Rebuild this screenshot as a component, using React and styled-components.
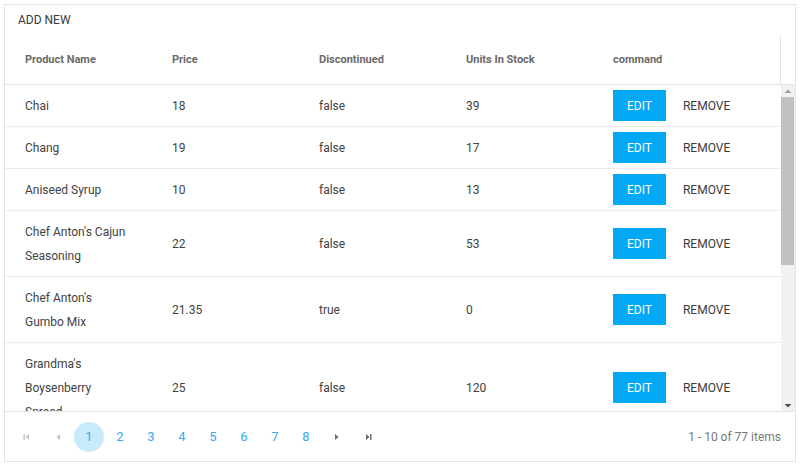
import React from "react";
import styled, { createGlobalStyle } from "styled-components";

const GlobalStyle = createGlobalStyle`
  html, body {
    margin: 0;
    padding: 0;
    background: #ffffff;
  }
  body {
    font-family: Roboto, "Liberation Sans", Arial, sans-serif;
    color: #424242;
  }
`;

const products = [
  { name: "Chai", price: 18, discontinued: false, stock: 39 },
  { name: "Chang", price: 19, discontinued: false, stock: 17 },
  { name: "Aniseed Syrup", price: 10, discontinued: false, stock: 13 },
  { name: "Chef Anton's Cajun Seasoning", price: 22, discontinued: false, stock: 53 },
  { name: "Chef Anton's Gumbo Mix", price: 21.35, discontinued: true, stock: 0 },
  { name: "Grandma's Boysenberry Spread", price: 25, discontinued: false, stock: 120 },
  { name: "Uncle Bob's Organic Dried Pears", price: 30, discontinued: false, stock: 15 },
  { name: "Northwoods Cranberry Sauce", price: 40, discontinued: false, stock: 6 },
  { name: "Mishi Kobe Niku", price: 97, discontinued: true, stock: 29 },
  { name: "Ikura", price: 31, discontinued: false, stock: 31 },
];

const columns = ["Product Name", "Price", "Discontinued", "Units In Stock", "command"];

const Page = styled.div`
  padding: 4px;
`;

const Grid = styled.div`
  height: 458px;
  border: 1px solid #e4e4e4;
  box-sizing: border-box;
  display: flex;
  flex-direction: column;
  background: #fff;
`;

const Toolbar = styled.div`
  height: 30px;
  display: flex;
  align-items: center;
`;

const FlatButton = styled.button`
  font-family: inherit;
  font-size: 12px;
  text-transform: uppercase;
  color: ${(p) => (p.$primary ? "#ffffff" : "#3a3a3a")};
  background: ${(p) => (p.$primary ? "#03a9f4" : "transparent")};
  border: none;
  height: 31px;
  padding: 0 ${(p) => (p.$primary ? "14px" : "13px")};
  margin: 0 ${(p) => (p.$primary ? "4px" : "0")} 0 0;
  cursor: pointer;
`;

const HeaderWrap = styled.div`
  padding-right: 14px;
  border-bottom: 1px solid #e4e4e4;
`;

const Table = styled.table`
  width: 100%;
  table-layout: fixed;
  border-collapse: collapse;
  border-spacing: 0;
`;

const HeaderTable = styled(Table)`
  border-right: 1px solid #e4e4e4;
`;

const Th = styled.th`
  text-align: left;
  font-size: 11px;
  font-weight: bold;
  color: #6a6a6a;
  height: 49px;
  padding: 0 20px;
  vertical-align: middle;
`;

const BodyArea = styled.div`
  flex: 1;
  min-height: 0;
  display: flex;
`;

const Content = styled.div`
  flex: 1;
  min-width: 0;
  overflow: hidden;
`;

const ScrollBar = styled.div`
  width: 14px;
  background: #f1f1f1;
  display: flex;
  flex-direction: column;
`;

const ScrollButton = styled.div`
  height: 12px;
  display: flex;
  align-items: center;
  justify-content: center;
`;

const ScrollThumb = styled.div`
  background: #c1c1c1;
  margin-right: 1px;
`;

const ScrollSpacer = styled.div`
  flex: 1;
`;

const Td = styled.td`
  font-size: 12px;
  line-height: 24px;
  padding: ${(p) => (p.$command ? "5px 20px" : "8.5px 24px 8.5px 20px")};
  border-bottom: 1px solid #ececec;
  vertical-align: middle;
  white-space: ${(p) => (p.$command ? "nowrap" : "normal")};
`;

const Pager = styled.div`
  height: 49px;
  border-top: 1px solid #e4e4e4;
  display: flex;
  align-items: center;
  padding: 0 14px 0 7px;
`;

const PagerNav = styled.div`
  display: flex;
  align-items: center;
  gap: 1px;
`;

const PagerItem = styled.span`
  width: 30px;
  height: 30px;
  border-radius: 50%;
  display: flex;
  align-items: center;
  justify-content: center;
  font-size: 13px;
  color: #3ba9f3;
  background: ${(p) => (p.$selected ? "#c9eafc" : "transparent")};
`;

const PagerInfo = styled.span`
  margin-left: auto;
  font-size: 12px;
  color: #787878;
`;

const Arrow = ({ dir = "left", bar = false, color }) => (
  <svg width="10" height="10" viewBox="0 0 10 10">
    {dir === "left" ? (
      <>
        {bar && <rect x="1.5" y="2" width="1.4" height="6" fill={color} />}
        <polygon points="7,2 3.5,5 7,8" fill={color} />
      </>
    ) : (
      <>
        <polygon points="3,2 6.5,5 3,8" fill={color} />
        {bar && <rect x="7.1" y="2" width="1.4" height="6" fill={color} />}
      </>
    )}
  </svg>
);

const Caret = ({ up, color }) => (
  <svg width="8" height="5" viewBox="0 0 8 5">
    <polygon points={up ? "0.5,4 7.5,4 4,0.5" : "0.5,1 7.5,1 4,4.5"} fill={color} />
  </svg>
);

const colWidths = [147, 147, 147, 147, null];

const Cols = () => (
  <colgroup>
    {colWidths.map((w, i) => (
      <col key={i} style={w ? { width: w } : undefined} />
    ))}
  </colgroup>
);

export default function App() {
  return (
    <Page>
      <GlobalStyle />
      <Grid>
        <Toolbar>
          <FlatButton>Add new</FlatButton>
        </Toolbar>
        <HeaderWrap>
          <HeaderTable>
            <Cols />
            <thead>
              <tr>
                {columns.map((c) => (
                  <Th key={c}>{c}</Th>
                ))}
              </tr>
            </thead>
          </HeaderTable>
        </HeaderWrap>
        <BodyArea>
          <Content>
            <Table>
              <Cols />
              <tbody>
                {products.map((p) => (
                  <tr key={p.name}>
                    <Td>{p.name}</Td>
                    <Td>{p.price}</Td>
                    <Td>{String(p.discontinued)}</Td>
                    <Td>{p.stock}</Td>
                    <Td $command>
                      <FlatButton $primary>Edit</FlatButton>
                      <FlatButton>Remove</FlatButton>
                    </Td>
                  </tr>
                ))}
              </tbody>
            </Table>
          </Content>
          <ScrollBar>
            <ScrollButton>
              <Caret up color="#a3a3a3" />
            </ScrollButton>
            <ScrollThumb style={{ height: 168 }} />
            <ScrollSpacer />
            <ScrollButton>
              <Caret color="#505050" />
            </ScrollButton>
          </ScrollBar>
        </BodyArea>
        <Pager>
          <PagerNav>
            <PagerItem>
              <Arrow dir="left" bar color="#c4c4c4" />
            </PagerItem>
            <PagerItem>
              <Arrow dir="left" color="#c4c4c4" />
            </PagerItem>
            {[1, 2, 3, 4, 5, 6, 7, 8].map((n) => (
              <PagerItem key={n} $selected={n === 1}>
                {n}
              </PagerItem>
            ))}
            <PagerItem>
              <Arrow dir="right" color="#6b6b6b" />
            </PagerItem>
            <PagerItem>
              <Arrow dir="right" bar color="#6b6b6b" />
            </PagerItem>
          </PagerNav>
          <PagerInfo>1 - 10 of 77 items</PagerInfo>
        </Pager>
      </Grid>
    </Page>
  );
}
